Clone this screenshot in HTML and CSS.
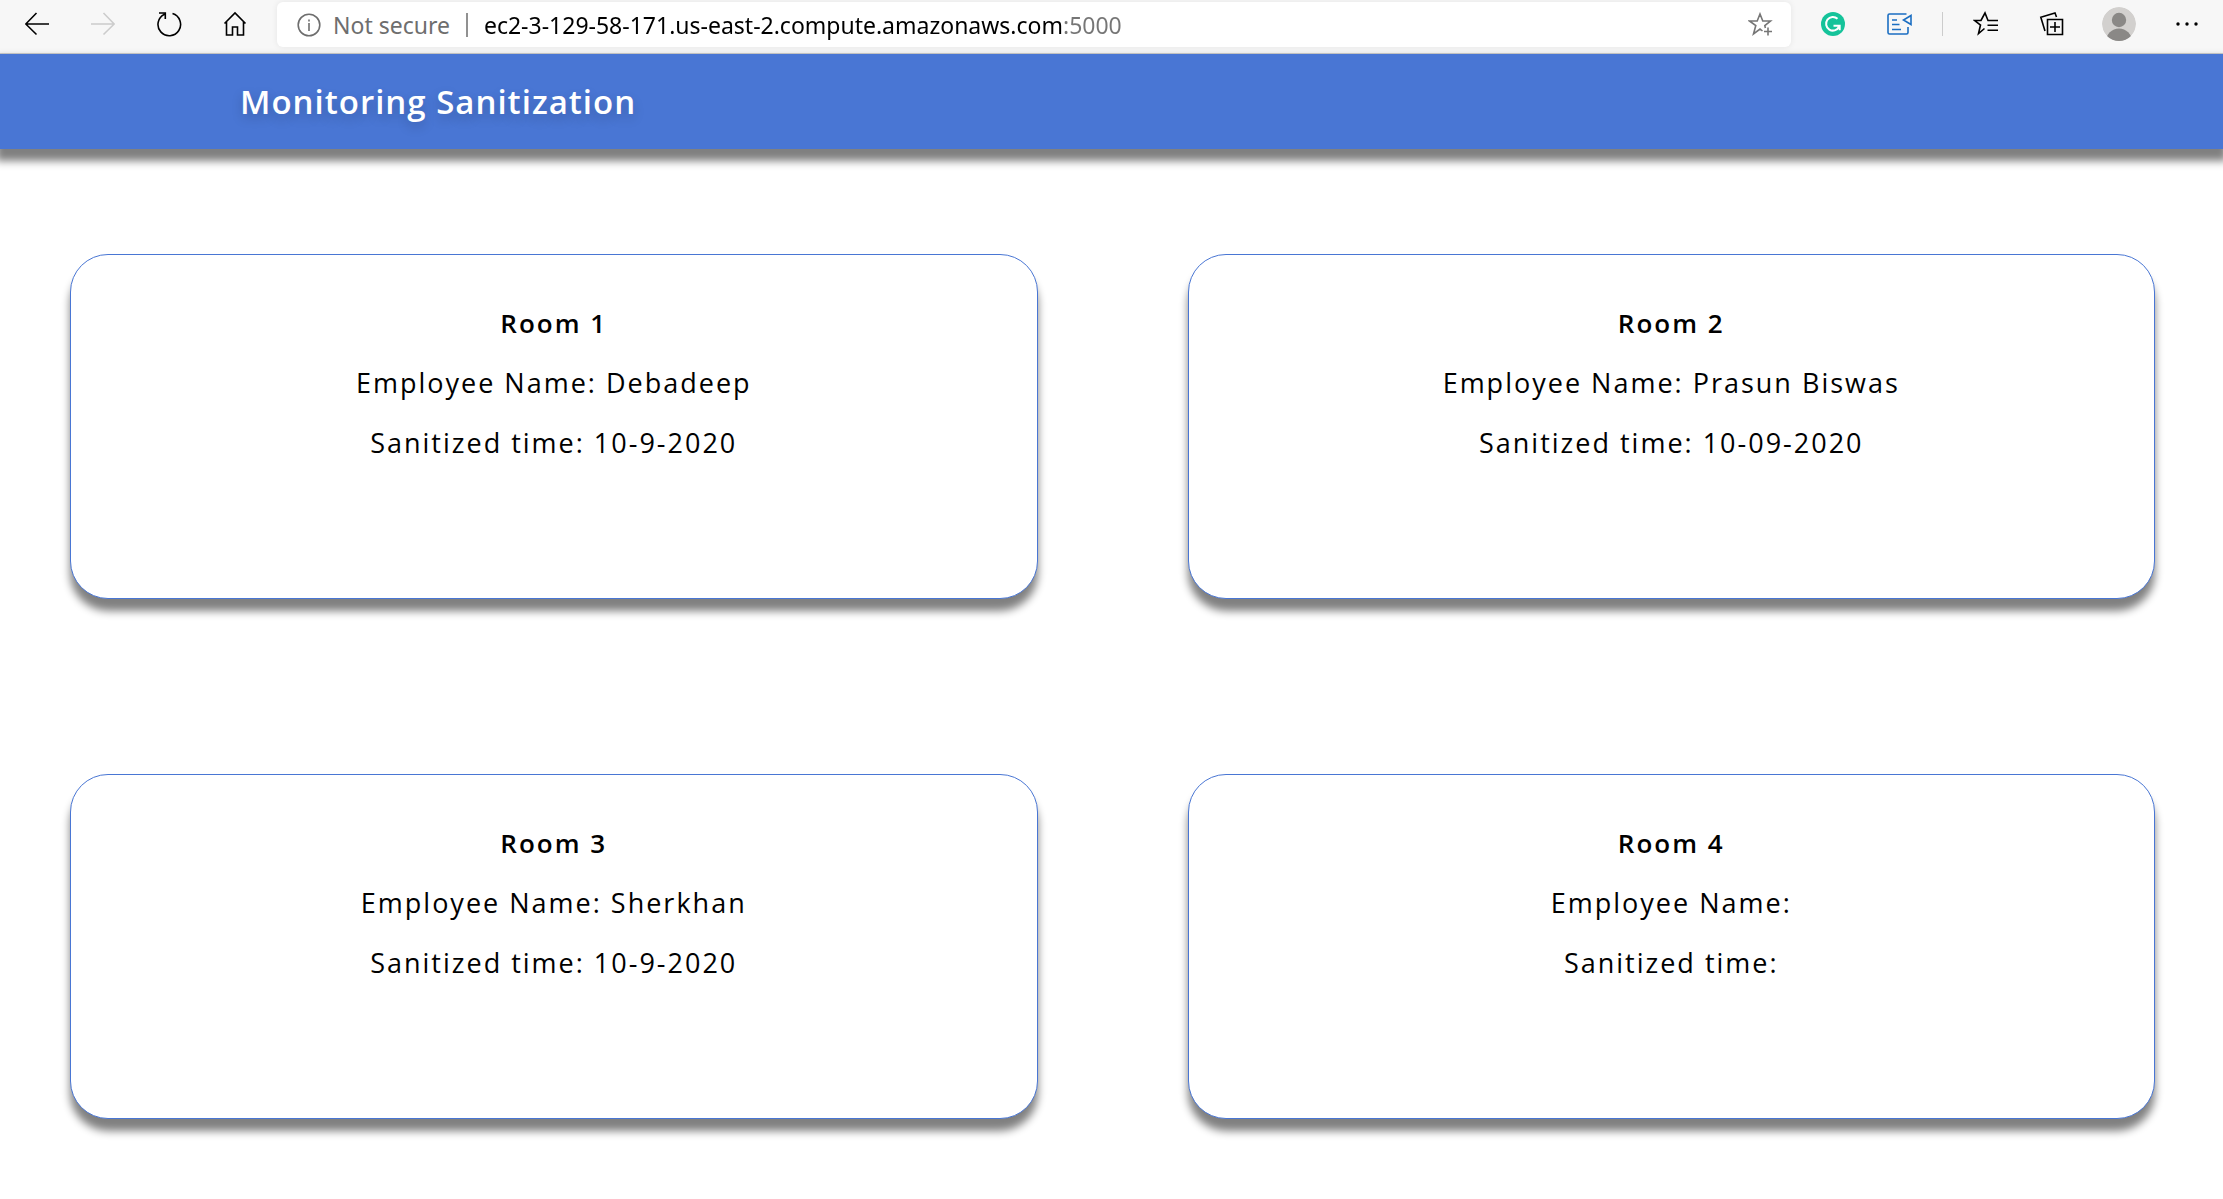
FILE: index.html
```html
<!DOCTYPE html>
<html lang="en">
<head>
<meta charset="utf-8">
<meta name="viewport" content="width=device-width, initial-scale=1">
<title>Monitoring Sanitization</title>
<link rel="stylesheet" href="styles.css">
</head>
<body>
<div class="toolbar">
  <button class="tool" aria-label="Back"><svg width="24" height="24" viewBox="0 0 24 24"><path d="M24 12H1M11.500 1L.8 12l10.700 10.500"/></svg></button>
  <button class="tool tool-off" aria-label="Forward" disabled><svg width="24" height="24" viewBox="0 0 24 24"><path d="M0 12h23M12.500 1l10.700 11-10.700 10.500"/></svg></button>
  <button class="tool" aria-label="Refresh"><svg width="26" height="26" viewBox="0 0 26 26"><path d="M8.500 3.200A11.300 11.300 0 1 0 16.500 2.600M3 2h6.300v6"/></svg></button>
  <button class="tool" aria-label="Home"><svg width="24" height="26" viewBox="0 0 24 26"><path d="M1.500 12.500L12 2l10.500 10.500M3.500 11v13H9.500v-8h5v8h6V11"/></svg></button>
  <div class="address">
    <button class="security"><svg width="24" height="24" viewBox="0 0 24 24"><circle cx="12" cy="12" r="10.800"/><path d="M12 10v8M12 6.500v2"/></svg>Not secure</button>
    <span class="address-rule"></span>
    <input class="url" type="text" aria-label="Address" value="ec2-3-129-58-171.us-east-2.compute.amazonaws.com:5000">
    <button class="favorite" aria-label="Add to favorites"><svg width="26" height="26" viewBox="0 0 26 26"><path d="M14.500 19L12 17l-6.500 5 2.300-8.500L1.500 9h7.700L12 2l2.800 7h7.700l-5.700 4.600.6 2.400M20 15.500v8M16 19.500h8"/></svg></button>
  </div>
  <button class="tool" aria-label="Grammarly"><svg width="26" height="26" viewBox="0 0 26 26"><circle cx="13" cy="13" r="12" fill="#15c39a" stroke="none"/><path stroke="#fff" stroke-width="2" d="M17.500 7.800a6.800 6.800 0 1 0 1.500 8M13.500 14.800h6.200v4.500"/></svg></button>
  <button class="tool tool-blue" aria-label="Read aloud"><svg width="26" height="26" viewBox="0 0 26 26"><path d="M20.500 3H3.500Q2 3 2 4.500v17Q2 23 3.500 23h17q1.500 0 1.500-1.500V16M6 9h5M6 13.500h7.500M6 18.500h9M25 4.500v9L17.500 9z"/></svg></button>
  <span class="divider"></span>
  <button class="tool" aria-label="Favorites"><svg width="26" height="26" viewBox="0 0 26 26"><path d="M11.500 17.500L5.500 22.500 7.500 14 1.500 9.500h6.500L12 2l3 7.500h10M14.500 14.200H25M14.500 19.200H25"/></svg></button>
  <button class="tool" aria-label="Collections"><svg width="26" height="26" viewBox="0 0 26 26"><path d="M8.500 8.500h15v15h-15zM16 11v10M11 16h10M6 20L1.800 6.200 16 2l1.500 4"/></svg></button>
  <button class="tool tool-wide" aria-label="Profile"><svg width="34" height="34" viewBox="0 0 34 34"><defs><clipPath id="face"><circle cx="17" cy="17" r="17"/></clipPath></defs><g clip-path="url(#face)" stroke="none"><circle cx="17" cy="17" r="17" fill="#d2d0ce"/><circle cx="17" cy="13" r="7.200" fill="#8a8886"/><circle cx="17" cy="34.500" r="13" fill="#8a8886"/></g></svg></button>
  <button class="tool tool-wide" aria-label="Settings and more"><svg width="24" height="24" viewBox="0 0 24 24"><g fill="#000" stroke="none"><circle cx="3" cy="12" r="1.700"/><circle cx="12" cy="12" r="1.700"/><circle cx="21" cy="12" r="1.700"/></g></svg></button>
</div>
<header class="banner"><h1 class="title">Monitoring Sanitization</h1></header>
<main class="rooms">
  <section class="room"><h2 class="line name">Room 1</h2><p class="line">Employee Name: Debadeep</p><p class="line">Sanitized time: 10-9-2020</p></section>
  <section class="room"><h2 class="line name">Room 2</h2><p class="line">Employee Name: Prasun Biswas</p><p class="line">Sanitized time: 10-09-2020</p></section>
  <section class="room"><h2 class="line name">Room 3</h2><p class="line">Employee Name: Sherkhan</p><p class="line">Sanitized time: 10-9-2020</p></section>
  <section class="room"><h2 class="line name">Room 4</h2><p class="line">Employee Name:</p><p class="line">Sanitized time:</p></section>
</main>
</body>
</html>
```
FILE: styles.css
```css
* { box-sizing: border-box; }

body {
  margin: 0;
  background: #fff;
  color: #000;
  font-family: "Open Sans", "Noto Sans", sans-serif;
}

button, input {
  margin: 0;
  padding: 0;
  border: 0;
  background: none;
  font: inherit;
}

svg {
  display: block;
  flex: none;
  fill: none;
  stroke: currentColor;
  stroke-width: 1.6;
}

.toolbar {
  display: flex;
  align-items: center;
  height: 54px;
  padding: 0 2px 6px 4px;
  background: #f7f7f7;
  border-bottom: 1px solid #ccc;
}

.tool {
  display: flex;
  flex: none;
  align-items: center;
  justify-content: center;
  width: 66px;
  height: 46px;
  color: #000;
}

.tool-off { color: #ccc; }
.tool-blue { color: #1b6ec2; }
.tool-wide { width: 68px; }

.address {
  display: flex;
  flex: 1;
  align-items: center;
  height: 45px;
  margin: 2px 9px 0;
  padding: 0 17px 0 20px;
  background: #fff;
  border-radius: 6px;
  box-shadow: 0 0 6px rgba(0, 0, 0, 0.08);
  font-family: "Noto Sans", sans-serif;
  font-size: 23px;
}

.security {
  display: flex;
  align-items: center;
  gap: 12px;
  color: #6e6e6e;
}

.address-rule {
  width: 2px;
  height: 24px;
  margin: 0 16px;
  background: #919191;
}

.url {
  flex: 1;
  min-width: 0;
  height: 40px;
  background: linear-gradient(to right, #000 580px, #767676 580px);
  background-clip: text;
  -webkit-background-clip: text;
  color: transparent;
}

.favorite { color: #767676; }

.divider {
  flex: none;
  width: 1px;
  height: 24px;
  margin: 0 10px;
  background: #ccc;
}

.banner {
  display: flex;
  align-items: center;
  height: 95px;
  padding: 0 240px;
  background: #4976d4;
  box-shadow: 0 8px 8px 4px #808080;
}

.title {
  margin: 0;
  color: #fff;
  font-size: 33px;
  font-weight: 600;
  letter-spacing: 1px;
  text-shadow: 0 5px 12px rgba(0, 0, 0, 0.2);
}

.rooms {
  display: grid;
  grid-template-columns: 1fr 1fr;
  gap: 175px 150px;
  padding: 105px 68px 80px 70px;
}

.room {
  min-height: 345px;
  padding: 38px 20px;
  border: 1px solid #4976d4;
  border-radius: 38px;
  background: #fff;
  box-shadow: 0 12px 8px #808080;
  text-align: center;
}

.line {
  margin: 0;
  font-size: 27px;
  font-weight: 400;
  line-height: 60px;
  letter-spacing: 2px;
}

.name {
  font-size: 26px;
  font-weight: 600;
}
```
